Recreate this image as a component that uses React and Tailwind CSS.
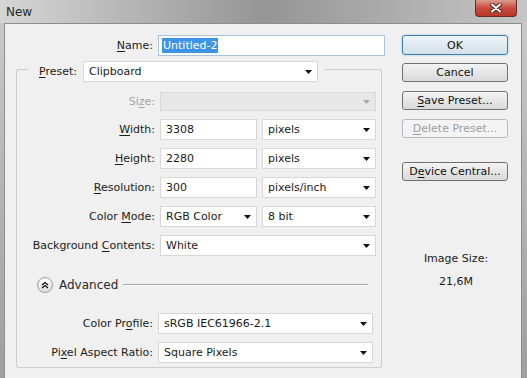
import React from 'react'

// small black combo arrow
function Caret({ off }) {
  return (
    <svg width="7" height="4" viewBox="0 0 7 4" className="shrink-0">
      <path d="M0 0H7L3.5 4Z" fill={off ? '#a8a8a8' : '#111'} />
    </svg>
  )
}

function Select({ value, className = '', off }) {
  return (
    <div
      className={`flex items-center justify-between pl-[5px] pr-[5px] border ${
        off ? 'bg-[#e8e8e8] border-[#d9d9d9]' : 'bg-white border-[#d7d7d7]'
      } ${className}`}
    >
      <span>{value}</span>
      <Caret off={off} />
    </div>
  )
}

function Field({ value, className = '' }) {
  return (
    <div className={`flex items-center h-[21px] pl-[5px] bg-white border border-[#d7d7d7] ${className}`}>
      {value}
    </div>
  )
}

// label with mnemonic letter underlined
function L({ a = '', u, b = '' }) {
  return (
    <>
      {a}
      <span className="underline underline-offset-[2px]">{u}</span>
      {b}
    </>
  )
}

function Row({ label, children, className = '', lw = 'w-[138px]', muted }) {
  return (
    <div className={`flex items-center ${className}`}>
      <div className={`${lw} shrink-0 text-right whitespace-nowrap ${muted ? 'text-[#a3a3a3]' : ''}`}>{label}</div>
      <div className="ml-[5px] flex gap-[5px]">{children}</div>
    </div>
  )
}

function Btn({ children, className = '', off }) {
  return (
    <div
      className={`w-[106px] h-[19px] flex items-center justify-center rounded-[3px] border ${
        off
          ? 'border-[#b5b9bc] bg-[#f4f4f4] text-[#9d9d9d]'
          : 'border-[#707070] bg-linear-to-b from-[#f4f4f4] to-[#d9d9d9] text-[#111]'
      } ${className}`}
    >
      {children}
    </div>
  )
}

export default function App() {
  return (
    <div className="w-[527px] h-[378px] overflow-hidden flex flex-col bg-linear-to-b from-[#cbcbcb] to-[#9f9f9f] font-['DejaVu_Sans',sans-serif] text-[11px] leading-none text-[#1b1b1b]">
      {/* title bar */}
      <div className="relative h-[23px] shrink-0 flex items-center pl-[6px] bg-linear-to-r from-[#d6d6d6] via-[#959595] to-[#c6c6c6] text-[12px] text-[#2a2a2a]">
        New
        <div className="absolute right-[10px] top-0 w-[42px] h-[17px] flex items-center justify-center rounded-b-[4px] border border-t-0 border-[#6b2a24] bg-linear-to-b from-[#dc9b90] via-[#c9493c] to-[#b8382a]">
          <svg width="12" height="10" viewBox="0 0 12 10">
            <path d="M2 1.5L10 8.5M10 1.5L2 8.5" stroke="#5a1d17" strokeWidth="4" strokeLinecap="round" />
            <path d="M2 1.5L10 8.5M10 1.5L2 8.5" stroke="#fff" strokeWidth="2.2" strokeLinecap="round" />
          </svg>
        </div>
      </div>

      {/* dialog body */}
      <div className="flex-1 ml-[4px] mr-[5px] flex border-l border-t border-r border-[#8d8d8d] bg-[#f0f0f0]">
        {/* left: form */}
        <div className="w-[386px] shrink-0 pt-[11px]">
          <div className="flex items-center">
            <div className="w-[148px] text-right">
              <L u="N" b="ame:" />
            </div>
            <div className="ml-[5px] w-[227px] h-[21px] flex items-center pl-[3px] bg-white border border-[#a7c2dc]">
              <span className="bg-[#3d93e6] text-white leading-[15px] px-[1px]">Untitled-2</span>
            </div>
          </div>

          {/* group box */}
          <div className="mt-[5px] ml-[11px] w-[366px]">
            <div className="flex h-[21px]">
              <div className="w-[13px] h-[13px] self-end border-l border-t border-[#cdcdcd] rounded-tl-[3px]" />
              <div className="ml-[10px] w-[39px] self-center whitespace-nowrap">
                <L u="P" b="reset:" />
              </div>
              <Select value="Clipboard" className="ml-[5px] w-[235px] h-[21px]" />
              <div className="flex-1 ml-[7px] h-[13px] self-end border-t border-r border-[#cdcdcd] rounded-tr-[3px]" />
            </div>

            <div className="border-l border-r border-b border-[#cdcdcd] rounded-b-[3px] pt-[10px] pb-[4px]">
              <Row muted label={<L a="Si" u="z" b="e:" />}>
                <Select off value="" className="w-[216px] h-[19px]" />
              </Row>
              <Row className="mt-[8px]" label={<L u="W" b="idth:" />}>
                <Field value="3308" className="w-[97px]" />
                <Select value="pixels" className="w-[114px] h-[21px]" />
              </Row>
              <Row className="mt-[8px]" label={<L u="H" b="eight:" />}>
                <Field value="2280" className="w-[97px]" />
                <Select value="pixels" className="w-[114px] h-[21px]" />
              </Row>
              <Row className="mt-[8px]" label={<L u="R" b="esolution:" />}>
                <Field value="300" className="w-[97px]" />
                <Select value="pixels/inch" className="w-[114px] h-[21px]" />
              </Row>
              <Row className="mt-[8px]" label={<L a="Color " u="M" b="ode:" />}>
                <Select value="RGB Color" className="w-[97px] h-[21px]" />
                <Select value="8 bit" className="w-[114px] h-[21px]" />
              </Row>
              <Row className="mt-[8px]" label={<L a="Background " u="C" b="ontents:" />}>
                <Select value="White" className="w-[216px] h-[21px]" />
              </Row>

              {/* advanced toggle */}
              <div className="mt-[21px] h-[16px] flex items-center pl-[20px] pr-[13px]">
                <div className="w-[16px] h-[16px] rounded-full border border-[#9c9c9c] bg-linear-to-b from-white to-[#dedede] flex items-center justify-center">
                  <svg width="8" height="8" viewBox="0 0 8 8">
                    <path d="M1 4L4 1.5L7 4M1 7L4 4.5L7 7" stroke="#111" strokeWidth="1.3" fill="none" />
                  </svg>
                </div>
                <span className="ml-[6px] text-[12px] text-[#2a2a2a]">Advanced</span>
                <div className="flex-1 ml-[5px] h-[2px] border-t border-[#a9a9a9] border-b border-b-white" />
              </div>

              <Row className="mt-[20px]" lw="w-[136px]" label={<L a="Color Pr" u="o" b="file:" />}>
                <Select value="sRGB IEC61966-2.1" className="w-[215px] h-[21px]" />
              </Row>
              <Row className="mt-[8px]" lw="w-[136px]" label={<L a="Pi" u="x" b="el Aspect Ratio:" />}>
                <Select value="Square Pixels" className="w-[215px] h-[21px]" />
              </Row>
            </div>
          </div>
        </div>

        {/* right: buttons */}
        <div className="flex-1 pt-[11px] pl-[11px] flex flex-col">
          <div className="w-[106px] h-[20px] flex items-center justify-center rounded-[3px] border border-[#3c7fb1] shadow-[0_0_2px_#7fc4f0] bg-linear-to-b from-[#eef4f8] to-[#d3e0ea] text-[#111]">
            OK
          </div>
          <Btn className="mt-[8px]">Cancel</Btn>
          <Btn className="mt-[9px]">
            <L u="S" b="ave Preset..." />
          </Btn>
          <Btn off className="mt-[9px]">
            <L u="D" b="elete Preset..." />
          </Btn>
          <Btn className="mt-[24px]">
            <L a="D" u="e" b="vice Central..." />
          </Btn>

          <div className="mt-[72px] -ml-[11px] flex flex-col items-center gap-[12px]">
            <span>Image Size:</span>
            <span>21,6M</span>
          </div>
        </div>
      </div>
    </div>
  )
}
